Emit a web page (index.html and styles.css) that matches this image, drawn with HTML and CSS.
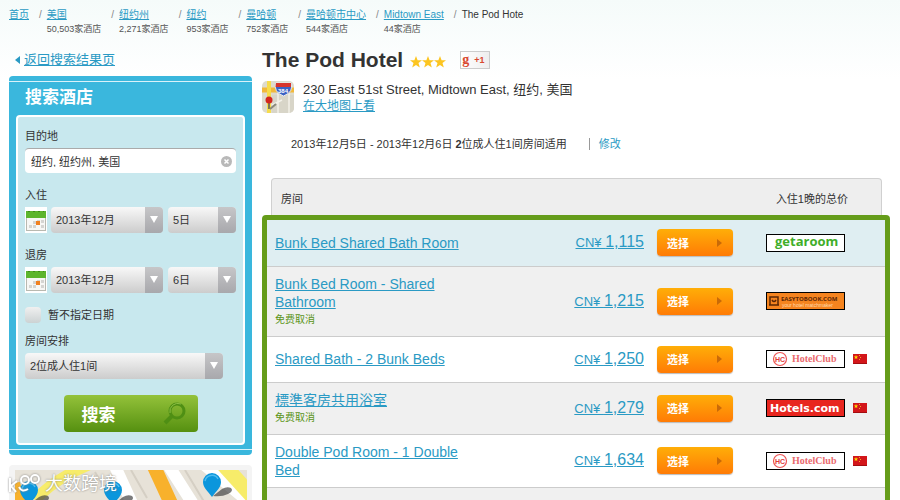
FILE: index.html
```
<!DOCTYPE html>
<html lang="zh-CN">
<head>
  <meta charset="UTF-8">
  <meta name="viewport" content="width=device-width, initial-scale=1.0">
  <title>The Pod Hotel</title>
  <link rel="stylesheet" href="styles.css">
</head>
<body>
  <svg class="defs" width="0" height="0" aria-hidden="true">
    <defs>
      <symbol id="calendar" viewBox="0 0 22 26">
        <rect width="22" height="26" fill="#fff"/>
        <rect x="1.5" y="5.5" width="19" height="18" fill="#f7f7f5" stroke="#b9b9b0"/>
        <rect x="1" y="4" width="20" height="7" fill="#5db52c"/>
        <path d="M3 4.5h2M8 4.5h2M13 4.5h2M18 4.5h1" stroke="#3f8a1a" fill="none"/>
        <path d="M8 14h3v3h-3zM12 13h3v2h-3zM16 13h3v3h-3zM4 18h3v3h-3zM8 18h3v3h-3zM16 18h3v3h-3z" fill="#d5d5d2"/>
        <rect x="11" y="14" width="4" height="4" fill="#f08020"/>
      </symbol>
      <symbol id="flag" viewBox="0 0 14 10">
        <rect width="14" height="10" fill="#d3161a"/>
        <rect y="9" width="14" height="1" fill="#a30d10"/>
        <path d="M3 1l.6 1.5h1.6l-1.3 1 .5 1.6L3 4.2l-1.4.9.5-1.6-1.3-1h1.6z" fill="#ffde00"/>
        <path d="M6 1h1v1H6zM7 3h1v1H7zM6 5h1v1H6z" fill="#f5a623"/>
      </symbol>
      <symbol id="star" viewBox="0 0 12 12">
        <path d="M6 0l1.6 4.2H12L8.5 7l1.3 4.5L6 8.9l-3.8 2.6L3.5 7 0 4.2h4.4z" fill="#fcc520"/>
      </symbol>
      <symbol id="pin" viewBox="0 0 32 26">
        <path d="M10 23l9-7q5-3 9-1 3 3-3 6-6 3-15 2z" fill="#444" opacity=".7"/>
        <path d="M9 24C5 18 0 15 0 9a9 9 0 0 1 18 0c0 6-5 9-9 15z" fill="#0b96dc"/>
        <path d="M2 8a7 7 0 0 1 13-2" fill="none" stroke="#4dbcf0" stroke-width="1.5"/>
      </symbol>
      <symbol id="hotelclub" viewBox="1 1 77 16">
        <circle cx="14" cy="9" r="6.5" fill="#fff" stroke="#e55" stroke-width="1.2"/>
        <text x="14" y="12" font-size="7" font-weight="bold" text-anchor="middle" fill="#e03a3a" font-family="Liberation Sans, sans-serif">HC</text>
        <text x="26" y="12" font-size="10" font-weight="bold" fill="#ea6a6e" font-family="Liberation Serif, serif">HotelClub</text>
      </symbol>
    </defs>
  </svg>

  <div class="page">
    <nav>
      <ul class="crumbs">
        <li><a href="#">首页</a></li>
        <li><a href="#">美国</a><span>50,503家酒店</span></li>
        <li><a href="#">纽约州</a><span>2,271家酒店</span></li>
        <li><a href="#">纽约</a><span>953家酒店</span></li>
        <li><a href="#">曼哈顿</a><span>752家酒店</span></li>
        <li><a href="#">曼哈顿市中心</a><span>544家酒店</span></li>
        <li><a href="#">Midtown East</a><span>44家酒店</span></li>
        <li><b>The Pod Hote</b></li>
      </ul>
    </nav>

    <div class="columns">
      <aside class="sidebar">
        <div class="back"><a href="#">返回搜索结果页</a></div>

        <form class="search">
          <h2>搜索酒店</h2>
          <div class="search-box">
            <label for="place">目的地</label>
            <div class="place">
              <input type="text" id="place" value="纽约, 纽约州, 美国">
              <button type="button" class="clear" aria-label="清除">
                <svg width="11" height="11" viewBox="0 0 11 11"><circle cx="5.5" cy="5.5" r="5.5" fill="#b9b9b9"/><path d="M3.5 3.5l4 4M7.5 3.5l-4 4" stroke="#fff" stroke-width="1.5"/></svg>
              </button>
            </div>

            <label for="inMonth">入住</label>
            <div class="dates">
              <svg width="22" height="26"><use href="#calendar"/></svg>
              <span class="drop month"><select id="inMonth"><option>2013年12月</option></select></span>
              <span class="drop day"><select aria-label="入住日"><option>5日</option></select></span>
            </div>

            <label for="outMonth">退房</label>
            <div class="dates">
              <svg width="22" height="26"><use href="#calendar"/></svg>
              <span class="drop month"><select id="outMonth"><option>2013年12月</option></select></span>
              <span class="drop day"><select aria-label="退房日"><option>6日</option></select></span>
            </div>

            <div class="nodate">
              <input type="checkbox" id="nodate">
              <label for="nodate">暂不指定日期</label>
            </div>

            <label for="rooms">房间安排</label>
            <span class="drop rooms"><select id="rooms"><option>2位成人住1间</option></select></span>

            <button type="button" class="go">搜索
              <svg width="26" height="26" viewBox="0 0 26 26" fill="none" stroke="#4f8f14"><circle cx="15" cy="10" r="7" stroke-width="3"/><path d="M10 15l-7 7" stroke-width="4"/><path d="M8 12a8 8 0 0 1 11-9" stroke="#8dbf45"/></svg>
            </button>
          </div>
        </form>

        <div class="map">
          <svg width="100%" height="90" viewBox="0 0 232 90" preserveAspectRatio="xMinYMin slice">
            <rect width="232" height="90" fill="#e7e2d8"/>
            <path d="M98-8l45 98M150-10l70 110M186-8l60 50" stroke="#fff" stroke-width="12" fill="none"/>
            <path d="M206-8l40 44" stroke="#f7ec6a" stroke-width="15" fill="none"/>
            <path d="M20 30Q40 8 76-6" stroke="#f7ec6a" stroke-width="11" fill="none"/>
            <path d="M136-10l46 100M-2 14l14 40" stroke="#f8b12c" stroke-width="14"/>
            <path d="M80 2l14 24M116 0l16 28M170 0l30 50" stroke="#d5cfc4" stroke-width="2"/>
            <use href="#pin" x="5" y="11" width="32" height="26"/>
            <use href="#pin" x="89" y="11" width="32" height="26"/>
            <use href="#pin" x="188" y="3" width="32" height="26"/>
          </svg>
        </div>
      </aside>

      <main class="hotel">
        <div class="title">
          <h1>The Pod Hotel</h1>
          <span class="stars">
            <svg width="12" height="12"><use href="#star"/></svg>
            <svg width="12" height="12"><use href="#star"/></svg>
            <svg width="12" height="12"><use href="#star"/></svg>
          </span>
          <button type="button" class="plus"><i>g</i>+1</button>
        </div>

        <div class="address">
          <svg width="32" height="32" viewBox="0 0 32 32">
            <defs><clipPath id="round"><rect width="32" height="32" rx="5"/></clipPath></defs>
            <g clip-path="url(#round)">
              <rect width="32" height="32" fill="#dedbcd"/>
              <path d="M10 14h22v18H10z" fill="#d8d5c8"/>
              <path d="M16 12v20M27 12v20M10 24l10-5" stroke="#f3f1e9" stroke-width="1.5" fill="none"/>
              <path d="M0 9h32" stroke="#f2b93a" stroke-width="5"/>
              <path d="M7 0v32" stroke="#f6dc4c" stroke-width="4"/>
              <path d="M14 2h15q3 9-7.5 13Q11 11 14 2z" fill="#3b62c4" stroke="#eee"/>
              <path d="M14 2h15v4H13.5z" fill="#d8342c"/>
              <text x="21" y="12" font-size="6" font-weight="bold" text-anchor="middle" fill="#fff" font-family="Liberation Sans, sans-serif">384</text>
              <path d="M7 20v8" stroke="#555" stroke-width="1.5"/>
              <path d="M8 28l6-5" stroke="#8b897c" stroke-width="2"/>
              <circle cx="7" cy="19" r="3.5" fill="#d3261f"/>
            </g>
          </svg>
          <div>
            <p>230 East 51st Street, Midtown East, 纽约, 美国</p>
            <a href="#">在大地图上看</a>
          </div>
        </div>

        <div class="stay">
          <p>2013年12月5日 - 2013年12月6日 <b>2</b>位成人住1间房间适用</p>
          <a href="#">修改</a>
        </div>

        <div class="rates-head"><span>房间</span><span>入住1晚的总价</span></div>
        <div class="rates">
          <table>
            <tbody>
              <tr class="best">
                <td class="name"><a href="#">Bunk Bed Shared Bath Room</a></td>
                <td class="price"><a href="#">CN¥ <span>1,115</span></a></td>
                <td class="pick"><button type="button">选择</button></td>
                <td class="site"><svg class="logo" width="79" height="18" viewBox="1 1 77 16"><text x="9" y="12" font-size="13" font-weight="bold" fill="#3fae2a" font-family="Open Sans, sans-serif">getaroom</text></svg></td>
              </tr>
              <tr class="grey">
                <td class="name"><a href="#">Bunk Bed Room - Shared Bathroom</a><small>免费取消</small></td>
                <td class="price"><a href="#">CN¥ <span>1,215</span></a></td>
                <td class="pick"><button type="button">选择</button></td>
                <td class="site"><svg class="logo" width="79" height="18" viewBox="1 1 77 16"><rect width="79" height="18" fill="#f5841f"/><path d="M4 5h8v8H4zM3 13h10M6 8q2 3 4 0" fill="none" stroke="#5a2605" stroke-width="1.5"/><text x="15" y="9" font-size="6" font-weight="bold" fill="#5a2605" font-family="Open Sans, sans-serif">EASYTOBOOK.COM</text><text x="16" y="15" font-size="5" fill="#ffd9ae" font-family="Liberation Sans, sans-serif">your hotel matchmaker</text></svg></td>
              </tr>
              <tr>
                <td class="name"><a href="#">Shared Bath - 2 Bunk Beds</a></td>
                <td class="price"><a href="#">CN¥ <span>1,250</span></a></td>
                <td class="pick"><button type="button">选择</button></td>
                <td class="site"><svg class="logo" width="79" height="18"><use href="#hotelclub"/></svg><svg class="flag" width="14" height="10"><use href="#flag"/></svg></td>
              </tr>
              <tr class="grey">
                <td class="name"><a href="#">標準客房共用浴室</a><small>免费取消</small></td>
                <td class="price"><a href="#">CN¥ <span>1,279</span></a></td>
                <td class="pick"><button type="button">选择</button></td>
                <td class="site"><svg class="logo" width="79" height="18" viewBox="1 1 77 16"><rect width="79" height="18" fill="#e8261f"/><text x="4" y="13" font-size="11" font-weight="bold" fill="#fff" font-family="DejaVu Sans, sans-serif">Hotels.com</text></svg><svg class="flag" width="14" height="10"><use href="#flag"/></svg></td>
              </tr>
              <tr>
                <td class="name"><a href="#">Double Pod Room - 1 Double Bed</a></td>
                <td class="price"><a href="#">CN¥ <span>1,634</span></a></td>
                <td class="pick"><button type="button">选择</button></td>
                <td class="site"><svg class="logo" width="79" height="18"><use href="#hotelclub"/></svg><svg class="flag" width="14" height="10"><use href="#flag"/></svg></td>
              </tr>
              <tr class="grey">
                <td class="name"><a href="#">雙人間共用浴室</a></td>
                <td class="price"></td>
                <td class="pick"></td>
                <td class="site"></td>
              </tr>
            </tbody>
          </table>
        </div>
      </main>
    </div>

    <div class="watermark">
      <svg width="32" height="20" viewBox="0 0 32 20" fill="none" stroke="#fff" stroke-width="2"><path d="M2 4v14M9 7L3 12l5 6M11 13q3 6 9 2"/><circle cx="17" cy="6" r="4"/><circle cx="27" cy="5" r="4"/></svg>
      <span>大数跨境</span>
    </div>
  </div>
</body>
</html>
```
FILE: styles.css
```
* {
  box-sizing: border-box;
}
body {
  margin: 0;
  font-family: "Liberation Sans", "Noto Sans CJK SC", sans-serif;
  font-size: 11px;
  line-height: 16px;
  color: #333;
}
h1, h2, p, ul {
  margin: 0;
  padding: 0;
}
a {
  color: #2a9ac4;
}
button, input, select {
  font-family: inherit;
  font-size: 11px;
  color: #333;
}
.defs {
  position: absolute;
}
.page {
  position: relative;
  height: 100vh;
  overflow: hidden;
  padding: 8px 10px 0 9px;
  background: linear-gradient(#f5fbfa, #fff 80px);
}

/* breadcrumb */
.crumbs {
  display: flex;
  list-style: none;
  font-size: 10px;
  line-height: 14px;
  height: 42px;
}
.crumbs li {
  display: grid;
  grid-template-columns: auto auto;
  align-content: start;
  white-space: nowrap;
}
.crumbs li + li::before {
  content: "/";
  color: #888;
  padding: 0 5px 0 10px;
}
.crumbs span {
  grid-column: 2;
  font-size: 9px;
  color: #555;
}
.crumbs a {
  justify-self: start;
}
.crumbs b {
  font-weight: normal;
}

.columns {
  display: flex;
  gap: 10px;
  align-items: flex-start;
}
.sidebar {
  width: 243px;
  flex: none;
}
.hotel {
  flex: 1;
}

/* search panel */
.back {
  display: flex;
  align-items: center;
  gap: 4px;
  height: 26px;
  padding: 0 0 6px 6px;
  font-size: 13px;
}
.back::before {
  content: "";
  border: 4px solid transparent;
  border-left: 0;
  border-right: 5px solid #2a9ac4;
}
.search {
  padding: 5px 7px;
  border-radius: 4px;
  background: #3ab7dd;
}
.search::before, .search::after {
  content: "";
  display: block;
  height: 1px;
  margin: 0 -7px;
  background: #d9f2fa;
}
.search h2 {
  padding: 4px 9px 5px;
  font-size: 17px;
  line-height: 24px;
  color: #fff;
}
.search-box {
  margin-bottom: 4px;
  padding: 11px 7px;
  border: 2px solid #fff;
  border-radius: 4px;
  background: #c8e8ee;
}
.search-box label {
  display: block;
  margin-bottom: 4px;
}
.place {
  display: flex;
  align-items: center;
  height: 25px;
  margin-bottom: 14px;
  padding: 0 4px 0 6px;
  border-top: 1px solid #aaa;
  border-radius: 4px;
  background: #fff;
}
.place input {
  flex: 1;
  min-width: 0;
  padding: 0;
  border: 0;
  background: none;
  outline: none;
}
.clear {
  display: flex;
  padding: 0;
  border: 0;
  background: none;
}
.dates {
  display: flex;
  margin-bottom: 14px;
}
.dates svg {
  margin-right: 4px;
}
.drop {
  display: flex;
  position: relative;
  height: 26px;
}
.drop select {
  width: 100%;
  padding: 0 5px;
  border: 0;
  border-radius: 4px;
  appearance: none;
  background: linear-gradient(#f8f8f8, #ccc);
}
.drop::before {
  content: "";
  position: absolute;
  top: 0;
  right: 0;
  width: 18px;
  height: 100%;
  border-radius: 0 4px 4px 0;
  background: linear-gradient(#c6c6c8, #a8a8ac);
  pointer-events: none;
}
.drop::after {
  content: "";
  position: absolute;
  top: 9px;
  right: 5px;
  border: 4px solid transparent;
  border-bottom: 0;
  border-top: 7px solid #fff;
  pointer-events: none;
}
.month {
  flex: 1;
  margin-right: 5px;
}
.day {
  width: 68px;
}
.nodate {
  display: flex;
  gap: 7px;
  margin-bottom: 10px;
}
.nodate input {
  width: 16px;
  height: 16px;
  margin: 0;
  border-radius: 4px;
  appearance: none;
  background: linear-gradient(#f0f0f0, #ccd2d3);
}
.search-box .nodate label {
  margin: 0;
}
.rooms {
  margin: 0 13px 16px 0;
}
.go {
  display: flex;
  align-items: center;
  justify-content: space-between;
  width: 134px;
  height: 37px;
  margin: 0 auto;
  padding: 0 10px 0 18px;
  border: 0;
  border-radius: 4px;
  background: linear-gradient(#94c23a, #559010);
  color: #fff;
  font-size: 17px;
  font-weight: bold;
}
.map {
  margin-top: 10px;
  padding: 5px 5px 5px 6px;
  border-radius: 4px;
  background: #f4f4f4;
}

/* hotel */
.title {
  display: flex;
  align-items: center;
  height: 20px;
}
.title h1 {
  font-size: 21px;
  line-height: 20px;
}
.stars {
  display: flex;
  margin: 4px 14px 0 7px;
}
.plus {
  display: flex;
  align-items: center;
  gap: 5px;
  width: 30px;
  height: 18px;
  padding: 0 4px 0 1px;
  border: 1px solid #ccc;
  background: linear-gradient(90deg, #fff, #eee);
  color: #d9482f;
  font-size: 9px;
  font-weight: bold;
}
.plus i {
  font: bold 14px "Liberation Serif", serif;
}
.address {
  display: flex;
  gap: 9px;
  margin: 11px 0 21px;
  font-size: 12px;
  line-height: 17px;
}
.address p {
  font-size: 13px;
}
.stay {
  display: flex;
  align-items: center;
  padding-left: 29px;
  margin-bottom: 26px;
}
.stay a {
  margin-left: 22px;
  padding-left: 9px;
  border-left: 1px solid #999;
  line-height: 12px;
  text-decoration: none;
}
.rates-head {
  display: flex;
  justify-content: space-between;
  height: 37px;
  margin: 0 8px 0 9px;
  padding: 12px 33px 0 9px;
  border: 1px solid #d0d0d0;
  border-bottom: 0;
  border-radius: 4px 4px 0 0;
  background: #eee;
}
.rates {
  border: 5px solid #659c1a;
  border-radius: 4px;
}
table {
  width: 100%;
  table-layout: fixed;
  border-collapse: collapse;
}
tr {
  height: 46px;
  border-bottom: 1px solid #ccc;
}
.best {
  background: #dfeef2;
}
.grey {
  background: #f0f0f0;
}
td {
  padding: 0;
}
.name {
  width: 220px;
  padding: 8px;
  font-size: 14px;
  line-height: 18px;
}
.name small {
  display: block;
  font-size: 10px;
  line-height: 17px;
  color: #5b9418;
}
.price {
  width: 170px;
  padding-right: 13px;
  text-align: right;
  font-size: 13px;
}
.price span {
  font-size: 16px;
}
.pick {
  width: 109px;
}
.pick button {
  display: flex;
  align-items: center;
  justify-content: space-between;
  width: 76px;
  height: 27px;
  padding: 0 11px 0 10px;
  border: 0;
  border-radius: 4px;
  background: linear-gradient(#ffae08, #ff7b05);
  box-shadow: 0 1px 1px #bbb;
  color: #fff;
  font-weight: bold;
}
.pick button::after {
  content: "";
  border: 4px solid transparent;
  border-right: 0;
  border-left: 5px solid #c96a08;
}
.logo {
  border: 1px solid #000;
  background: #fff;
  vertical-align: middle;
}
.flag {
  margin-left: 8px;
  vertical-align: middle;
}

.watermark {
  position: absolute;
  left: 8px;
  bottom: 5px;
  display: flex;
  align-items: center;
  gap: 5px;
  font-size: 18px;
  line-height: 22px;
  color: #fff;
  text-shadow: 0 0 2px #777;
}
.watermark svg {
  filter: drop-shadow(0 0 1px #888);
}
```
